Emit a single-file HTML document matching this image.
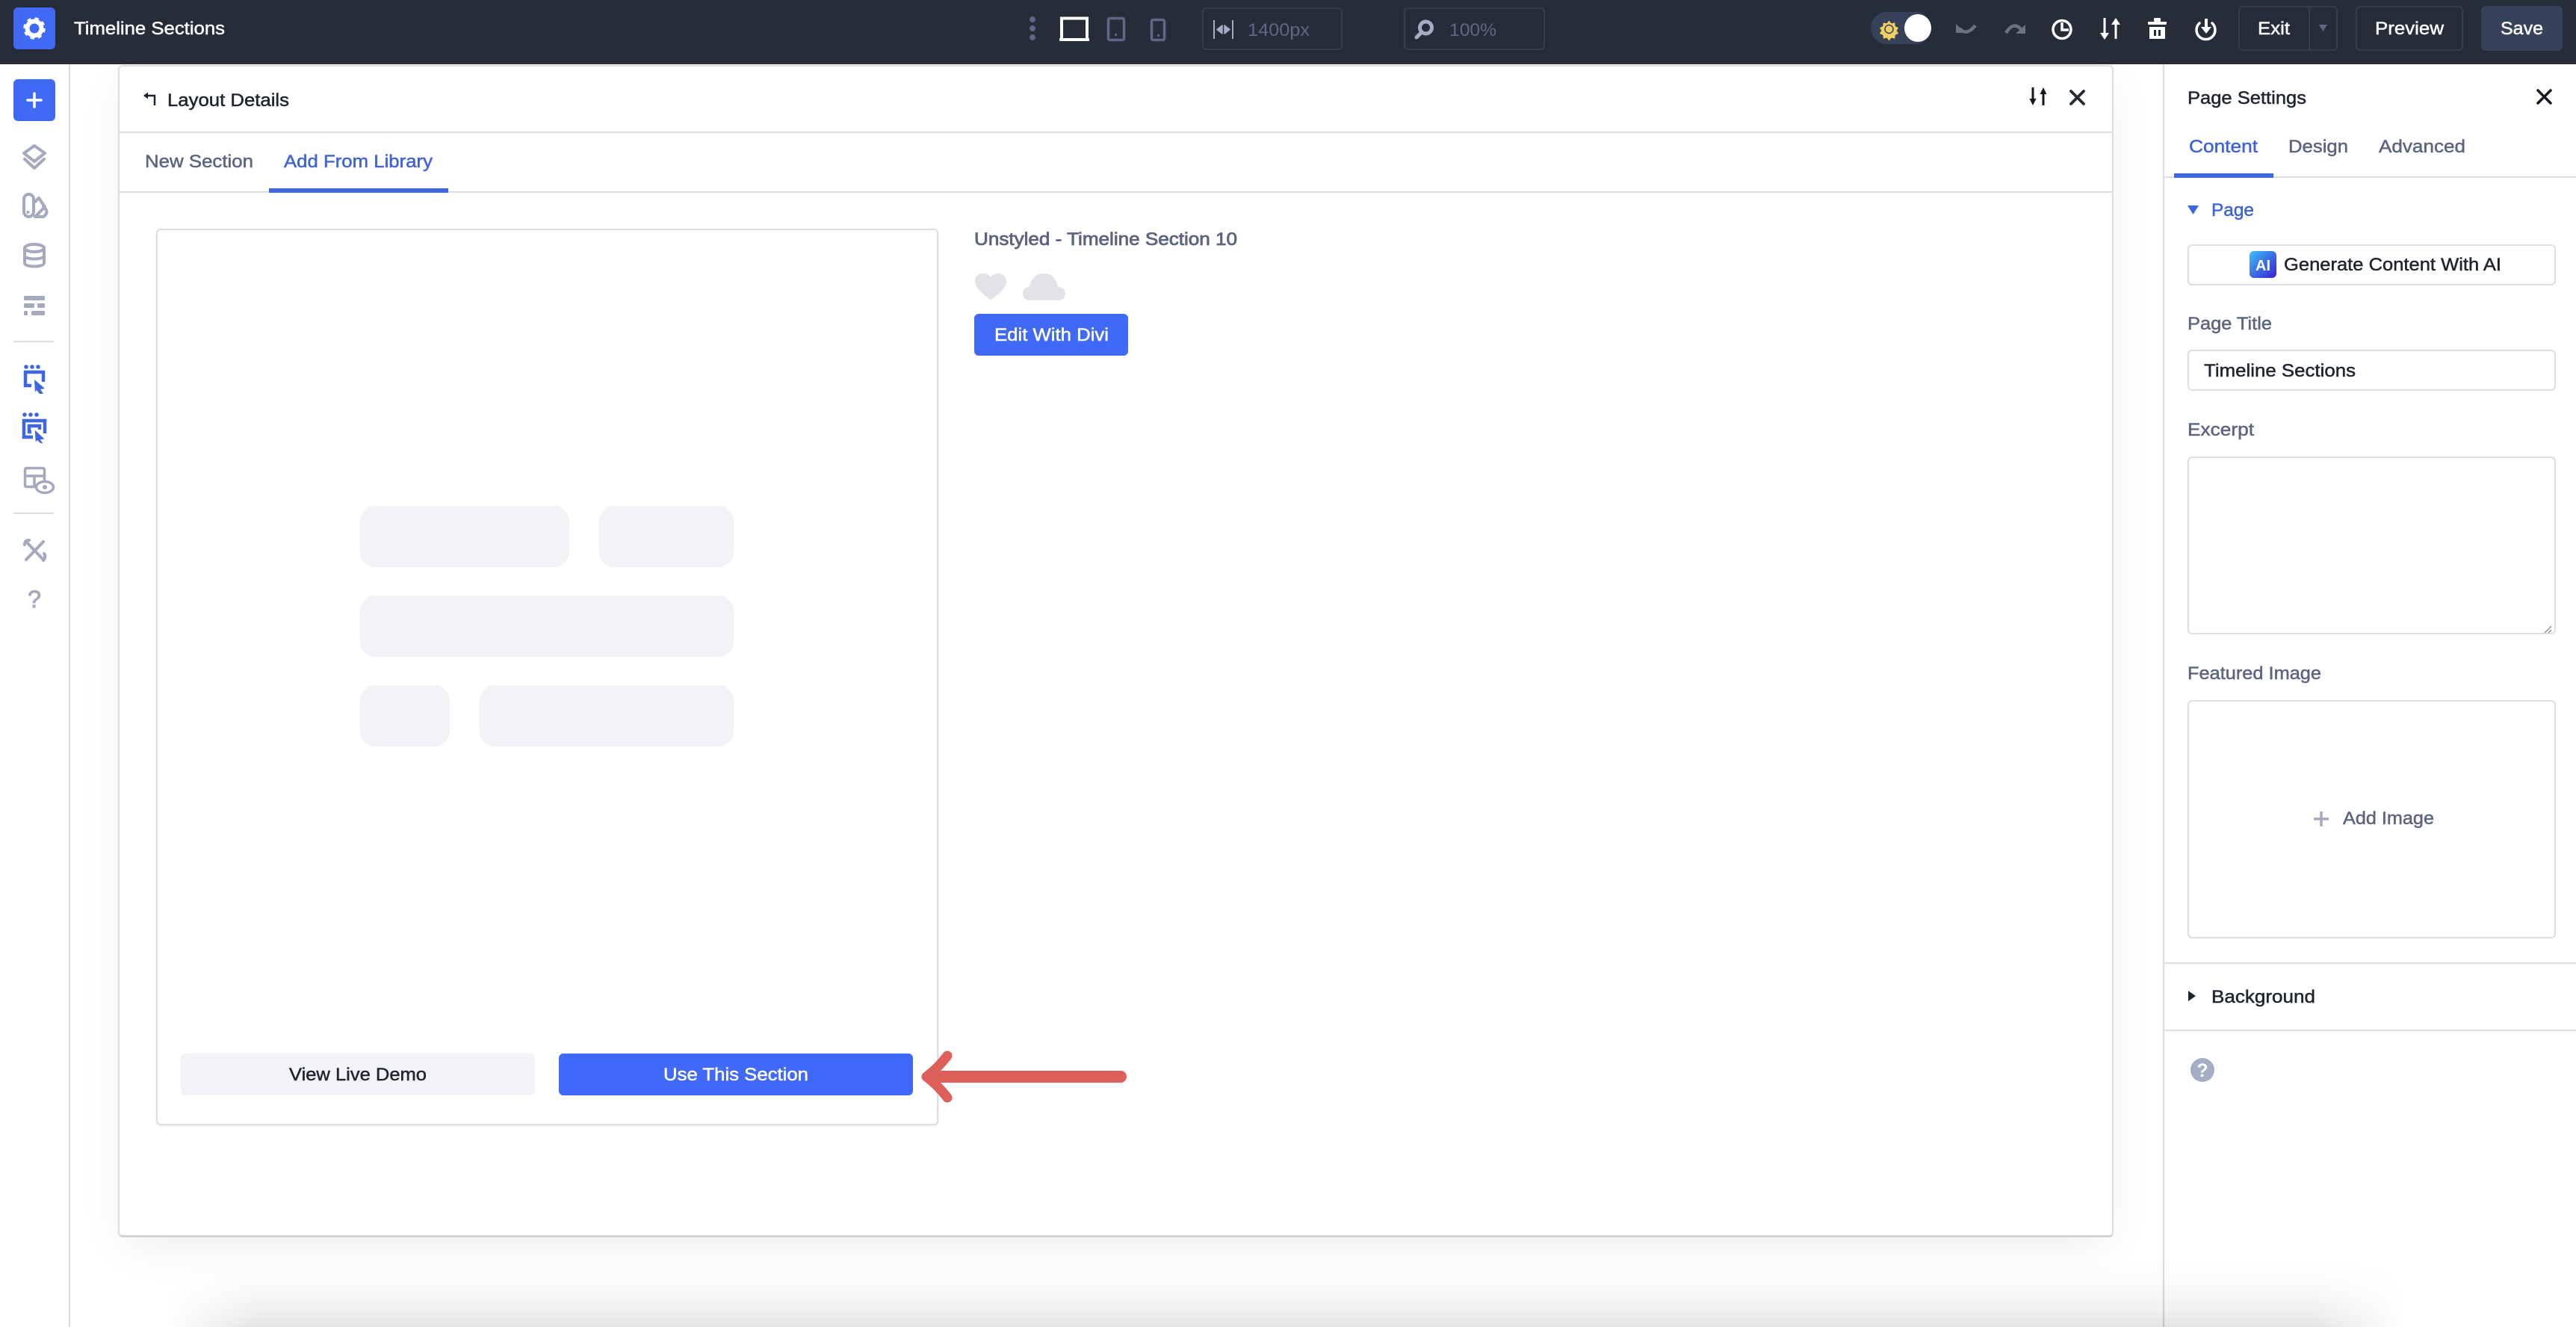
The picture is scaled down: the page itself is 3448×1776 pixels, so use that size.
<!DOCTYPE html>
<html lang="en"><head><meta charset="utf-8"><title>Timeline Sections</title>
<style>
html,body{margin:0;padding:0;background:#fff;width:3448px;height:1776px;overflow:hidden}
body{font-family:"Liberation Sans",sans-serif}
div{position:absolute;box-sizing:border-box}
#root{left:0;top:0;width:3448px;height:1776px;overflow:hidden;background:#fff}
#top{left:0;top:0;width:3448px;height:86px;background:#262d39}
#side{left:0;top:86px;width:94px;height:1690px;background:#fff;border-right:2px solid #d9dbe0}
#card{left:158px;top:87px;width:2671px;height:1569px;background:#fff;border:2px solid #dbdde2;border-bottom:3px solid #d2d3d6;border-radius:6px}
#cardshadow{left:168px;top:100px;width:2651px;height:1556px;box-shadow:0 8px 60px rgba(0,0,0,.075);clip-path:inset(-70px -70px -70px -70px)}
.hl{height:2px;background:#dcdee3}
#panel{left:2895px;top:86px;width:553px;height:1690px;background:#fff;border-left:2px solid #d9dbe0}
.bx{background:#fff;border:2px solid #dcdee3;border-radius:6px}
.ph{background:#f2f3f6;border-radius:20px}
.btn{border-radius:6px}
#under{left:220px;top:1686px;width:3000px;height:90px;background:linear-gradient(to top,rgba(0,0,0,.105) 0,rgba(0,0,0,.07) 20%,rgba(0,0,0,.035) 45%,rgba(0,0,0,.012) 72%,rgba(0,0,0,0) 100%);-webkit-mask-image:linear-gradient(to right,transparent 0,#000 130px,#000 2870px,transparent 3000px);mask-image:linear-gradient(to right,transparent 0,#000 130px,#000 2870px,transparent 3000px)}
svg{position:absolute;left:0;top:0}
text{font-family:"Liberation Sans",sans-serif;font-size:24.5px}
</style></head><body>
<div id="root">
<div id="side"></div>
<div id="cardshadow"></div>
<div id="card"></div>
<div id="panel"></div>
<div id="top"></div>
<div class="hl" style="left:160px;top:176px;width:2667px"></div>
<div class="hl" style="left:160px;top:256px;width:2667px"></div>
<div class="hl" style="left:2897px;top:236px;width:551px"></div>
<div class="hl" style="left:2897px;top:1288px;width:551px"></div>
<div class="hl" style="left:2897px;top:1378px;width:551px"></div>
<div class="bx" style="left:209px;top:306px;width:1047px;height:1200px;box-shadow:0 1px 3px rgba(0,0,0,.1)"></div>
<div class="ph" style="left:482px;top:677px;width:280px;height:82px"></div>
<div class="ph" style="left:802px;top:677px;width:180px;height:82px"></div>
<div class="ph" style="left:482px;top:797px;width:500px;height:82px"></div>
<div class="ph" style="left:482px;top:917px;width:120px;height:82px"></div>
<div class="ph" style="left:642px;top:917px;width:340px;height:82px"></div>
<div class="btn" style="left:242px;top:1410px;width:474px;height:56px;background:#f2f3f6"></div>
<div class="btn" style="left:748px;top:1410px;width:474px;height:56px;background:#4069f9"></div>
<div class="btn" style="left:1304px;top:420px;width:206px;height:56px;background:#4069f5"></div>
<div class="bx" style="left:2928px;top:327px;width:493px;height:55px"></div>
<div class="bx" style="left:2928px;top:468px;width:493px;height:55px"></div>
<div class="bx" style="left:2928px;top:611px;width:493px;height:238px"></div>
<div class="bx" style="left:2928px;top:937px;width:493px;height:319px"></div>
<div class="btn" style="left:18px;top:10px;width:56px;height:56px;background:#4069f5"></div>
<div class="btn" style="left:18px;top:106px;width:56px;height:56px;background:#4069f5"></div>
<div class="btn" style="left:1609px;top:10px;width:188px;height:57px;border:2px solid #353e4d"></div>
<div class="btn" style="left:1879px;top:10px;width:189px;height:57px;border:2px solid #353e4d"></div>
<div class="btn" style="left:2996px;top:8px;width:133px;height:60px;border:2px solid #353e4d"></div>
<div style="left:3090px;top:8px;width:2px;height:60px;background:#353e4d"></div>
<div class="btn" style="left:3153px;top:8px;width:144px;height:60px;border:2px solid #353e4d"></div>
<div class="btn" style="left:3321px;top:8px;width:109px;height:60px;background:#36415a"></div>
<div style="left:2504px;top:16px;width:81px;height:43px;border-radius:22px;background:#36415a"></div>
<div style="left:2549px;top:19px;width:36px;height:37px;border-radius:50%;background:#fff"></div>
<div id="under"></div>

<svg width="3448" height="1776" viewBox="0 0 3448 1776" xmlns="http://www.w3.org/2000/svg">
<defs><linearGradient id="ai" x1="0" y1="0" x2="1" y2="1"><stop offset="0" stop-color="#3bc0f5"/><stop offset="1" stop-color="#3a1fd4"/></linearGradient></defs>

<!-- gear -->
<g fill="none" stroke="#fff"><circle cx="46" cy="38" r="9.5" stroke-width="6"/><circle cx="46" cy="38" r="12.5" stroke-width="4.5" stroke-dasharray="5 4.82"/></g>
<!-- plus -->
<path d="M46 125v18M37 134h18" stroke="#fff" stroke-width="3.6" stroke-linecap="round"/>

<!-- sidebar icons -->
<g fill="none" stroke="#a5a9bd" stroke-width="4" stroke-linejoin="round" stroke-linecap="round">
<path d="M46 195L60 205 46 216 32 205Z"/><path d="M33 213L46 225 59 213"/>
<rect x="32" y="260" width="13" height="30" rx="6.5"/><path d="M45 272L52 265 60 277 47 290"/><path d="M47 290H58Q64 286 62 281L58 276"/>
<ellipse cx="46" cy="332" rx="13" ry="5"/><path d="M33 332V352C33 358 59 358 59 352V332M33 342C33 348 59 348 59 342"/>
</g>
<circle cx="37.500" cy="284" r="2" fill="#a5a9bd"/>
<g fill="#a5a9bd"><rect x="32" y="396" width="28" height="6" rx="1.500"/><rect x="32" y="406" width="14" height="6" rx="1.500"/><rect x="50" y="406" width="10" height="6" rx="1.500"/><rect x="32" y="416" width="5" height="6" rx="1.500"/><rect x="42" y="416" width="18" height="6" rx="1.500"/></g>
<rect x="18" y="456" width="54" height="2" fill="#dcdee3"/>
<rect x="18" y="686" width="54" height="2" fill="#dcdee3"/>
<g fill="#3e66e0"><circle cx="35" cy="491" r="2.800"/><circle cx="43" cy="491" r="2.800"/><circle cx="51" cy="491" r="2.800"/><polygon points="46,508 60,520 54,521 58,527 53,527 49,522 47,525"/></g>
<path d="M42 516H34V498H58V511" fill="none" stroke="#3e66e0" stroke-width="4.500"/>
<g fill="#3e66e0"><circle cx="33" cy="555" r="2.800"/><circle cx="41" cy="555" r="2.800"/><circle cx="49" cy="555" r="2.800"/></g>
<path d="M44 585H32V563H60V580M42 578H39V570H53V575" fill="none" stroke="#3e66e0" stroke-width="4.500"/>
<polygon points="46,574 61,588 55,589 59,594 54,594 50,590 47,593" fill="#3e66e0" stroke="#fff" stroke-width="1.500"/>
<g fill="none" stroke="#a5a9bd" stroke-width="3.500"><rect x="33.500" y="626.500" width="26" height="25" rx="2"/><path d="M33 637H60M46 637V652"/></g>
<ellipse cx="60" cy="652" rx="11.500" ry="7.500" fill="#fff" stroke="#a5a9bd" stroke-width="3.500"/><circle cx="60" cy="652" r="3" fill="#a5a9bd"/>
<g fill="none" stroke="#a5a9bd" stroke-width="4" stroke-linecap="round"><path d="M35 749L58 725"/><path d="M37 727L57 748"/><path d="M33 729Q33 723 39 723M58 750Q62 745 59 741"/></g>
<text x="46" y="813" text-anchor="middle" style="font-size:32px" fill="#a5a9bd" stroke="#a5a9bd" stroke-width="1">?</text>

<!-- topbar center -->
<g fill="#5e6785"><circle cx="1382" cy="26" r="4"/><circle cx="1382" cy="38" r="4"/><circle cx="1382" cy="50" r="4"/></g>
<path d="M1421 53V24.500H1455V53" fill="none" stroke="#fff" stroke-width="4"/><rect x="1418" y="51" width="40" height="4" rx="1" fill="#fff"/>
<rect x="1483.500" y="24.500" width="21" height="29" rx="2" fill="none" stroke="#5e6785" stroke-width="3.500"/><rect x="1492" y="45" width="3" height="3" fill="#5e6785"/>
<rect x="1541.500" y="26.500" width="17" height="27" rx="2" fill="none" stroke="#5e6785" stroke-width="3.500"/><rect x="1549" y="46" width="3" height="3" fill="#5e6785"/>
<path d="M1625 27V52M1650 27V52" stroke="#a5adc4" stroke-width="2"/>
<path d="M1629 39.500L1636 34V45ZM1646 39.500L1639 34V45Z" fill="#a5adc4" stroke="#a5adc4" stroke-width="1.500" stroke-linejoin="round"/>
<circle cx="1908.500" cy="37" r="8" fill="none" stroke="#a5adc4" stroke-width="5"/><path d="M1902 44L1896 50" stroke="#a5adc4" stroke-width="5" stroke-linecap="round"/>

<!-- sun -->
<g fill="#efcf63" stroke="#262d39" stroke-width=".5"><path d="M2528.500 27l3 4 5-1 .500 5 4.500 2-2.500 4 2.500 4-4.500 2-.500 5-5-1-3 4-3-4-5 1-.500-5-4.500-2 2.500-4-2.500-4 4.500-2 .500-5 5 1z"/></g>
<circle cx="2528.500" cy="39" r="5.500" fill="none" stroke="#36415a" stroke-width="1.500"/>
<!-- undo / redo -->
<polygon points="2618,32 2618,44 2631,44" fill="#6b7280"/>
<path d="M2623 38Q2632 49 2644 34" fill="none" stroke="#6b7280" stroke-width="4.500"/>
<polygon points="2711,33 2711,45 2698,45" fill="#6b7280"/>
<path d="M2705 39Q2695 28 2685 44" fill="none" stroke="#6b7280" stroke-width="4.500"/>
<!-- clock -->
<circle cx="2760" cy="39.500" r="12" fill="none" stroke="#fff" stroke-width="3.500"/><path d="M2760 30V40H2769" fill="none" stroke="#fff" stroke-width="3.500"/>
<!-- arrows -->
<g fill="#fff"><rect x="2815.500" y="24" width="3" height="22"/><polygon points="2811,44 2823,44 2817,53"/><rect x="2830.500" y="31" width="3" height="21"/><polygon points="2826,33 2838,33 2832,24"/></g>
<!-- trash -->
<g fill="#fff"><rect x="2883" y="24" width="9" height="5" rx="1.500"/><rect x="2875" y="29" width="25" height="4" rx="1"/><path d="M2877 36H2898V52H2877ZM2883 40V48H2886V40ZM2889 40V48H2892V40Z" fill-rule="evenodd"/></g>
<!-- power -->
<path d="M2944 31A12.500 12.500 0 1 0 2961 31" fill="none" stroke="#fff" stroke-width="3.500" stroke-linecap="round"/>
<rect x="2951" y="25" width="4" height="14" fill="#fff"/><polygon points="2946,36 2960,36 2953,45" fill="#fff"/>
<polygon points="3104,33 3115,33 3109.500,42" fill="#5e6785"/>

<!-- card head -->
<path d="M207 141V128H195" fill="none" stroke="#1f2530" stroke-width="2.500"/><polygon points="192,128 198,123.500 198,132.500" fill="#1f2530"/>
<g fill="#14171f"><rect x="2719.500" y="117" width="3" height="18"/><polygon points="2716.500,132 2725.500,132 2721,141"/><rect x="2733.500" y="124" width="3" height="17"/><polygon points="2730.500,126 2739.500,126 2735,117"/></g>
<path d="M2772 122L2789 139M2789 122L2772 139" stroke="#262b36" stroke-width="3.800" stroke-linecap="round"/>

<!-- tab underlines -->
<rect x="360" y="252" width="240" height="6" fill="#4069e0"/>
<rect x="2910" y="232" width="133" height="6" fill="#4069e0"/>

<!-- heart & cloud -->
<path d="M1326 402C1318 395 1305 387 1305 376.500C1305 370 1310 366 1316 366C1320 366 1324 368 1326 371C1328 368 1332 366 1336 366C1342 366 1347 370 1347 376.500C1347 387 1334 395 1326 402Z" fill="#e1e3e8"/>
<path d="M1378 402C1372 402 1369 398 1369 393C1369 388 1373 384 1378 384C1380 373 1387 366 1398 366C1408 366 1414 373 1416 384C1422 384 1426 388 1426 393C1426 398 1422 402 1417 402Z" fill="#e1e3e8"/>

<!-- red arrow -->
<path d="M1500 1441H1245" stroke="#dd5f5a" stroke-width="16" stroke-linecap="round"/>
<path d="M1268 1413Q1255 1430 1240 1441Q1255 1452 1268 1469" fill="none" stroke="#dd5f5a" stroke-width="13" stroke-linecap="round" stroke-linejoin="round"/>

<!-- panel icons -->
<path d="M3397 121L3414 138M3414 121L3397 138" stroke="#14171f" stroke-width="3.500" stroke-linecap="round"/>
<polygon points="2928,275 2943,275 2935.500,287" fill="#3e66e0"/>
<rect x="3011" y="336" width="36" height="36" rx="6" fill="url(#ai)"/>
<text x="3029" y="362" text-anchor="middle" font-weight="700" fill="#fff" style="font-size:20px">AI</text>
<path d="M3415 838L3406 847M3415 843L3411 847" stroke="#8a8f9c" stroke-width="1.500"/>
<path d="M3107 1086V1106M3097 1096H3117" stroke="#a5a9bd" stroke-width="3.500"/>
<polygon points="2929,1326 2939,1333 2929,1340" fill="#1f2530"/>
<circle cx="2948" cy="1432" r="16" fill="#a5adc4"/>
<text x="2948" y="1441" text-anchor="middle" font-weight="700" fill="#fff" style="font-size:25px">?</text>

<!-- white text -->
<g fill="#fff" stroke="#fff" stroke-width=".5">
<text x="99" y="46" textLength="202" lengthAdjust="spacingAndGlyphs">Timeline Sections</text>
<text x="3022" y="46" textLength="43" lengthAdjust="spacingAndGlyphs">Exit</text>
<text x="3179" y="46" textLength="92" lengthAdjust="spacingAndGlyphs">Preview</text>
<text x="3347" y="46" textLength="57" lengthAdjust="spacingAndGlyphs">Save</text>
<text x="1331" y="456" textLength="153" lengthAdjust="spacingAndGlyphs">Edit With Divi</text>
<text x="888" y="1446" textLength="194" lengthAdjust="spacingAndGlyphs">Use This Section</text>
</g>
<g fill="#5e6785">
<text x="1670" y="48" textLength="83" lengthAdjust="spacingAndGlyphs">1400px</text>
<text x="1940" y="48" textLength="63" lengthAdjust="spacingAndGlyphs">100%</text>
</g>
<!-- dark text -->
<g fill="#1f2530" stroke="#1f2530" stroke-width=".5">
<text x="224" y="142" textLength="163" lengthAdjust="spacingAndGlyphs">Layout Details</text>
<text x="387" y="1446" textLength="184" lengthAdjust="spacingAndGlyphs">View Live Demo</text>
<text x="2928" y="139" textLength="159" lengthAdjust="spacingAndGlyphs">Page Settings</text>
<text x="3057" y="362" textLength="291" lengthAdjust="spacingAndGlyphs">Generate Content With AI</text>
<text x="2950" y="504" textLength="203" lengthAdjust="spacingAndGlyphs">Timeline Sections</text>
<text x="2960" y="1342" textLength="139" lengthAdjust="spacingAndGlyphs">Background</text>
</g>
<!-- muted text -->
<g fill="#5b6480" stroke="#5b6480" stroke-width=".5">
<text x="194" y="224" textLength="145" lengthAdjust="spacingAndGlyphs">New Section</text>
<text x="1304" y="328" textLength="352" lengthAdjust="spacingAndGlyphs" stroke-width=".8">Unstyled - Timeline Section 10</text>
<text x="3063" y="204" textLength="80" lengthAdjust="spacingAndGlyphs">Design</text>
<text x="3184" y="204" textLength="116" lengthAdjust="spacingAndGlyphs">Advanced</text>
<text x="2928" y="441" textLength="113" lengthAdjust="spacingAndGlyphs">Page Title</text>
<text x="2928" y="583" textLength="89" lengthAdjust="spacingAndGlyphs">Excerpt</text>
<text x="2928" y="909" textLength="179" lengthAdjust="spacingAndGlyphs">Featured Image</text>
<text x="3136" y="1103" textLength="122" lengthAdjust="spacingAndGlyphs">Add Image</text>
</g>
<!-- blue text -->
<g fill="#4163d8" stroke="#4163d8" stroke-width=".5">
<text x="380" y="224" textLength="199" lengthAdjust="spacingAndGlyphs">Add From Library</text>
<text x="2930" y="204" textLength="92" lengthAdjust="spacingAndGlyphs">Content</text>
<text x="2960" y="289" textLength="57" lengthAdjust="spacingAndGlyphs">Page</text>
</g>
</svg>
</div>
</body></html>
